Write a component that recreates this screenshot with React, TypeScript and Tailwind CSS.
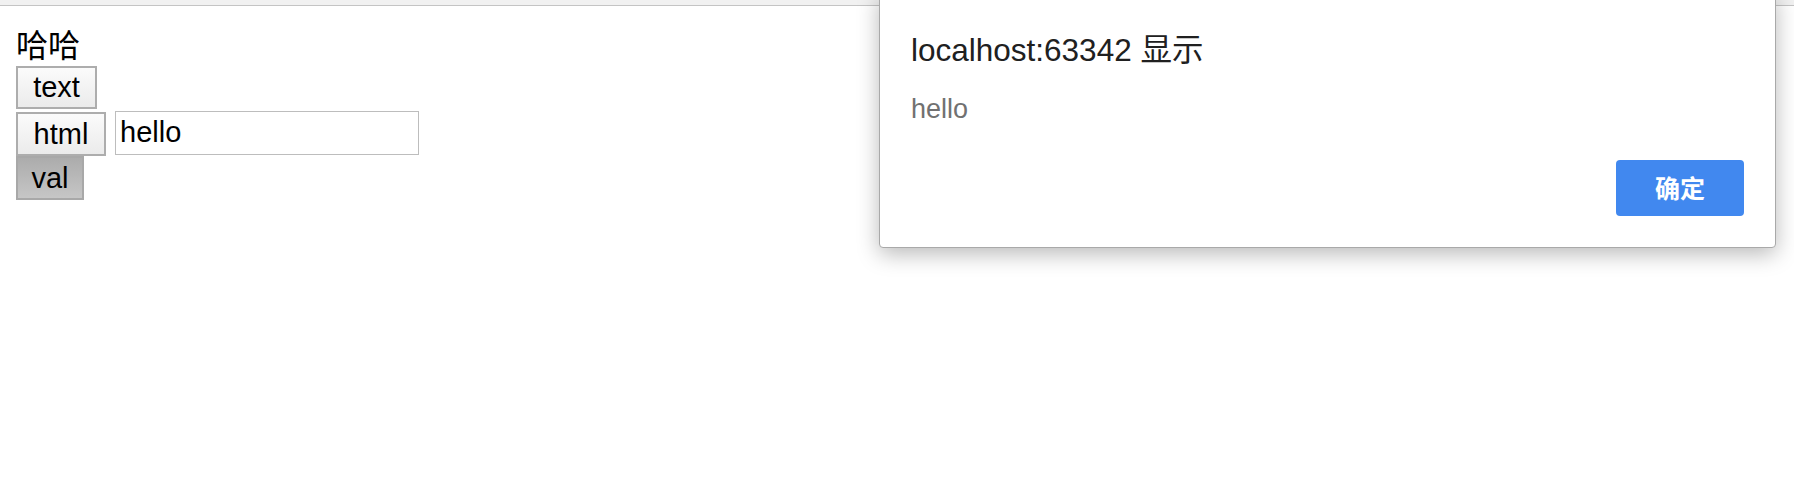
import React from 'react';

const sans = "font-['Liberation_Sans','Noto_Sans_CJK_SC',sans-serif]";

const PageButton: React.FC<{ label: string; width: string; pressed?: boolean; extra?: string }> = ({
  label,
  width,
  pressed,
  extra = '',
}) => (
  <button
    className={`${width} ${extra} h-[44px] flex items-center justify-center border-2 text-[29px] leading-none text-black ${
      pressed
        ? 'border-[#a8a8a8] bg-gradient-to-b from-[#acacac] to-[#c6c6c6]'
        : 'border-[#adadad] bg-gradient-to-b from-[#fbfbfb] to-[#ebebeb]'
    }`}
  >
    {label}
  </button>
);

const AlertDialog: React.FC = () => (
  <div className="absolute left-[879px] top-[-8px] w-[897px] h-[256px] bg-white border border-[#a9a9a9] rounded-b-[4px] shadow-[0_6px_22px_rgba(0,0,0,0.28)] flex flex-col pl-[31px] pr-[31px] pt-[39px] pb-[31px]">
    <div className="h-[36px] leading-[36px] text-[31.5px] text-[#202020] whitespace-nowrap">localhost:63342 显示</div>
    <div className="mt-[26px] h-[30px] leading-[30px] text-[27px] text-[#717171]">hello</div>
    <div className="mt-[36px] flex justify-end">
      <button className="w-[128px] h-[56px] rounded-[4px] bg-[#4188ef] text-white text-[25px] font-bold font-['Noto_Sans_CJK_SC',sans-serif] flex items-center justify-center">
        确定
      </button>
    </div>
  </div>
);

export default function App() {
  return (
    <div className={`relative w-[1794px] h-[484px] bg-white overflow-hidden ${sans}`}>
      {/* browser toolbar edge */}
      <div className="h-[6px] bg-[#f1f1f1] border-b border-[#c4c4c4]" />

      <div className="pl-[16px] pt-[16px]">
        <div className="h-[44px] leading-[42px] text-[32px] text-black font-['Noto_Sans_CJK_SC',sans-serif]">哈哈</div>

        <PageButton label="text" width="w-[81px]" extra="h-[43px]!" />

        <div className="flex items-start">
          <PageButton label="html" width="w-[90px]" extra="mt-[3px]" />
          <div className="ml-[9px] mt-[2px] w-[304px] h-[44px] border border-[#bdbdbd] pl-[4px] flex items-center text-[29px] text-black">
            hello
          </div>
        </div>

        <PageButton label="val" width="w-[68px]" pressed />
      </div>

      <AlertDialog />
    </div>
  );
}
